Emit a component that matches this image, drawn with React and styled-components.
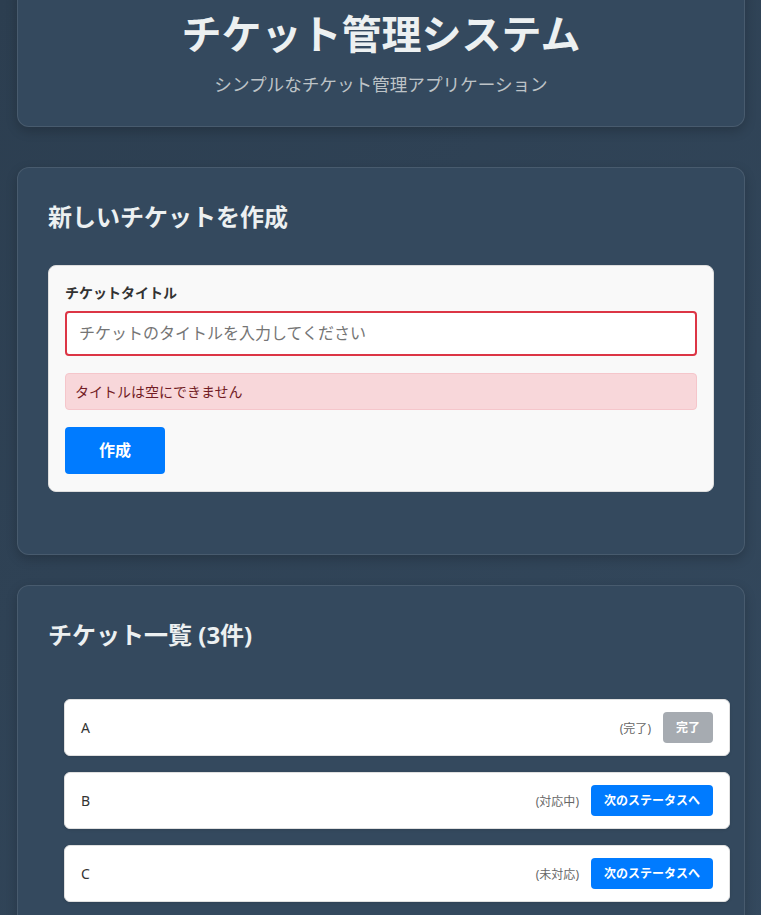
import styled, { createGlobalStyle } from "styled-components";

const GlobalStyle = createGlobalStyle`
    * { box-sizing: border-box; }
    body {
        margin: 0;
        font-family: "Noto Sans", "Noto Sans CJK JP", sans-serif;
        background: linear-gradient(135deg, #2c3e50 0%, #34495e 100%);
        min-height: 100vh;
    }
`;

const tickets = [
    { id: 1, title: "A", status: "完了" },
    { id: 2, title: "B", status: "対応中" },
    { id: 3, title: "C", status: "未対応" },
];

export default function App() {
    return (
        <Page>
            <GlobalStyle />
            <HeaderCard>
                <Title>チケット管理システム</Title>
                <Subtitle>シンプルなチケット管理アプリケーション</Subtitle>
            </HeaderCard>

            <Card>
                <SectionTitle>新しいチケットを作成</SectionTitle>
                <FormBox>
                    <Label>チケットタイトル</Label>
                    <Input placeholder="チケットのタイトルを入力してください" />
                    <ErrorBox>タイトルは空にできません</ErrorBox>
                    <CreateButton>作成</CreateButton>
                </FormBox>
            </Card>

            <Card>
                <SectionTitle>チケット一覧 (3件)</SectionTitle>
                <TicketList>
                    {tickets.map((t) => (
                        <TicketItem key={t.id}>
                            <TicketTitle>{t.title}</TicketTitle>
                            <TicketRight>
                                <Status>({t.status})</Status>
                                <StatusButton $done={t.status === "完了"}>
                                    {t.status === "完了" ? "完了" : "次のステータスへ"}
                                </StatusButton>
                            </TicketRight>
                        </TicketItem>
                    ))}
                </TicketList>
            </Card>
        </Page>
    );
}

const Page = styled.div`
    margin-top: -21px;
    padding: 0 16px 20px 17px;
`;

const CardBase = styled.div`
    background: #34495e;
    border: 1px solid rgba(255, 255, 255, 0.1);
    border-radius: 12px;
    box-shadow: 0 4px 12px rgba(0, 0, 0, 0.2);
`;

const HeaderCard = styled(CardBase)`
    padding: 30px 30px 29px;
    text-align: center;
    margin-bottom: 40px;
`;

const Title = styled.h1`
    margin: 0 0 13px;
    font-size: 40px;
    line-height: 48px;
    font-weight: 700;
    color: #ecf0f1;
`;

const Subtitle = styled.p`
    margin: 0;
    font-size: 17.6px;
    line-height: 26px;
    color: #bdc3c7;
`;

const Card = styled(CardBase)`
    padding: 31px 30px 30px;
    margin-bottom: 30px;
`;

const SectionTitle = styled.h2`
    margin: 0 0 30px;
    font-size: 24px;
    line-height: 36px;
    font-weight: 700;
    color: #ecf0f1;
`;

const FormBox = styled.div`
    background: #f9f9f9;
    border: 1px solid #ddd;
    border-radius: 8px;
    padding: 16px 16px 17px;
    margin-bottom: 32px;
`;

const Label = styled.label`
    display: block;
    font-size: 14px;
    line-height: 21px;
    font-weight: 700;
    color: #333;
    margin-bottom: 8px;
`;

const Input = styled.input`
    display: block;
    width: 100%;
    padding: 10px 12px;
    font-family: inherit;
    font-size: 16px;
    line-height: 21px;
    border: 2px solid #dc3545;
    border-radius: 4px;
    background: #fff;
    outline: none;
    margin-bottom: 17px;

    &::placeholder {
        color: #757575;
    }
`;

const ErrorBox = styled.div`
    background: #f8d7da;
    border: 1px solid #f5c6cb;
    border-radius: 4px;
    color: #721c24;
    font-size: 14px;
    line-height: 19px;
    padding: 8px 9px;
    margin-bottom: 17px;
`;

const CreateButton = styled.button`
    width: 100px;
    padding: 12px 0;
    font-family: inherit;
    font-size: 16px;
    line-height: 23px;
    font-weight: 700;
    color: #fff;
    background: #007bff;
    border: none;
    border-radius: 4px;
    cursor: pointer;
`;

const TicketList = styled.ul`
    list-style: none;
    margin: 46px 0 0;
    padding: 0;
    display: flex;
    flex-direction: column;
    gap: 16px;
`;

const TicketItem = styled.li`
    width: 100%;
    margin-left: 16px;
    display: flex;
    align-items: center;
    justify-content: space-between;
    background: #fff;
    border: 1px solid #e0e0e0;
    border-radius: 6px;
    padding: 12px 16px;
    box-shadow: 0 1px 3px rgba(0, 0, 0, 0.1);
`;

const TicketTitle = styled.span`
    font-size: 14px;
    color: #333;
`;

const TicketRight = styled.div`
    display: flex;
    align-items: center;
    gap: 12px;
`;

const Status = styled.span`
    font-size: 12px;
    color: #666;
`;

const StatusButton = styled.button`
    padding: 6px 13px;
    font-family: inherit;
    font-size: 12px;
    line-height: 19px;
    font-weight: 700;
    color: #fff;
    background: ${(p) => (p.$done ? "#a6abb1" : "#007bff")};
    border: none;
    border-radius: 4px;
    cursor: ${(p) => (p.$done ? "not-allowed" : "pointer")};
`;
